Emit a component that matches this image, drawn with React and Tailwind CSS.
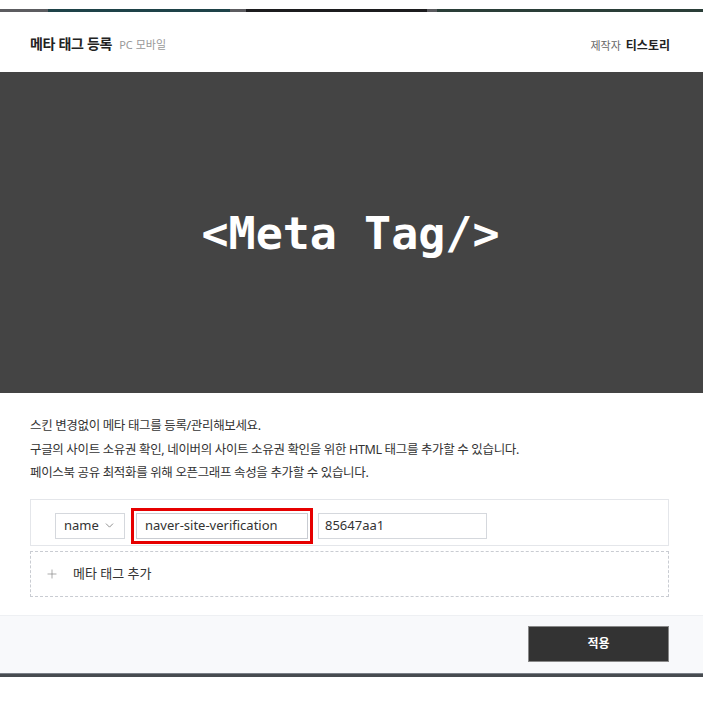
import { ChevronDown, Plus } from "lucide-react";

const ko = { fontFamily: '"Noto Sans", "Noto Sans CJK KR", sans-serif' };

export default function App() {
  return (
    <div className="w-[715px] h-[707px] bg-white" style={ko}>
      <div className="w-[703px]">
        {/* top strip */}
        <div className="pt-[9px]">
          <div className="flex h-[3px]">
            <div className="w-[48px] bg-[#5c5c60]" />
            <div className="w-[182px] bg-[#1e4248]" />
            <div className="w-[16px] bg-[#5c5c60]" />
            <div className="w-[181px] bg-[#1c1c1e]" />
            <div className="w-[10px] bg-[#5c5c60]" />
            <div className="flex-1 bg-[#2a3e38]" />
          </div>
        </div>

        {/* header */}
        <div className="h-[60px] flex items-center justify-between px-[30px] pt-[2px]">
          <div className="flex items-baseline gap-[7px]">
            <span className="text-[14px] font-bold text-[#222] tracking-[-0.3px]">메타 태그 등록</span>
            <span className="text-[11px] text-[#999]">PC 모바일</span>
          </div>
          <div className="flex items-baseline gap-[5px] pr-[3px] pt-[6px]">
            <span className="text-[11px] text-[#666]">제작자</span>
            <span className="text-[12px] font-bold text-[#222]">티스토리</span>
          </div>
        </div>

        {/* banner */}
        <div className="h-[321px] bg-[#444444] flex items-center justify-center">
          <span
            className="text-white text-[45px] font-bold pt-[2px] pr-[2px]"
            style={{ fontFamily: '"DejaVu Sans Mono", monospace' }}
          >
            &lt;Meta Tag/&gt;
          </span>
        </div>

        {/* description */}
        <div className="px-[30px] pt-[21px] text-[12.5px] text-[#333] leading-[23.5px] tracking-[-0.35px]">
          <p>스킨 변경없이 메타 태그를 등록/관리해보세요.</p>
          <p>구글의 사이트 소유권 확인, 네이버의 사이트 소유권 확인을 위한 HTML 태그를 추가할 수 있습니다.</p>
          <p>페이스북 공유 최적화를 위해 오픈그래프 속성을 추가할 수 있습니다.</p>
        </div>

        {/* meta rows */}
        <div className="pl-[30px] pr-[34px] pt-[14px]">
          <div className="h-[47px] border border-[#e4e6ea] flex items-start pt-[13px] pl-[24px] gap-[10px]">
            <div className="w-[70px] h-[26px] border border-[#d5d8dd] flex items-center justify-between pl-[8px] pr-[8px] text-[13px] text-[#333]">
              <span>name</span>
              <ChevronDown className="w-[13px] h-[13px] text-[#777]" strokeWidth={1.5} />
            </div>
            <div className="outline-[3px] outline-[#e60000] outline outline-offset-[2px] ml-[1px]">
              <div className="w-[172px] h-[26px] border border-[#c9ccd2] flex items-center px-[8px] text-[13px] text-[#333]">
                naver-site-verification
              </div>
            </div>
            <div className="w-[169px] h-[26px] border border-[#d5d8dd] flex items-center px-[6px] text-[13px] text-[#333]">
              85647aa1
            </div>
          </div>
          <div className="mt-[5px] h-[46px] border border-dashed border-[#c9ccd2] flex items-center pl-[14px] gap-[14px]">
            <Plus className="w-[14px] h-[14px] text-[#888]" strokeWidth={1.2} />
            <span className="text-[13px] text-[#333]">메타 태그 추가</span>
          </div>
        </div>

        {/* footer */}
        <div className="mt-[18px] h-[58px] bg-[#f8f9fb] border-t border-[#eef0f3] flex items-center justify-end pr-[34px]">
          <button className="w-[141px] h-[36px] bg-[#333333] border border-[#888] text-white text-[12px] font-bold">
            적용
          </button>
        </div>
        <div className="h-[4px] bg-[#474b50] border-t border-[#7b8088]" />
      </div>
    </div>
  );
}
